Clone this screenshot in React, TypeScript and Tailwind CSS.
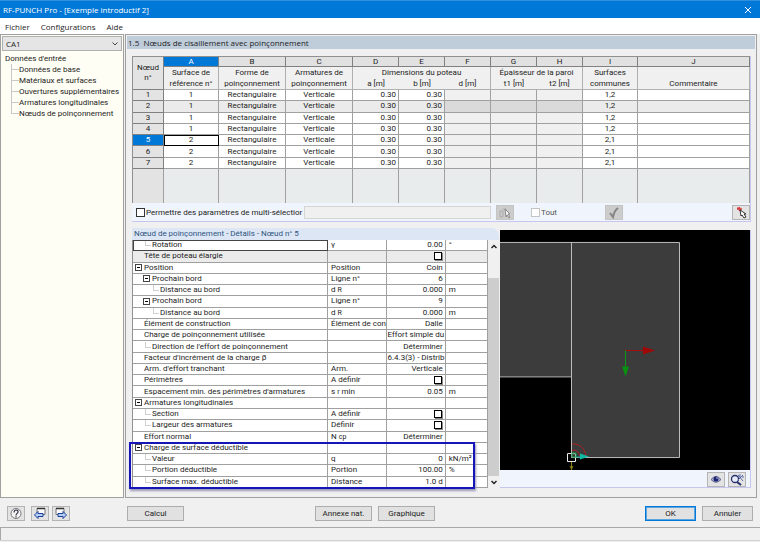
import type { ReactNode } from "react";

type TreeLevel = 0 | 1 | 2;

interface DetailRow {
  label: string;
  level?: TreeLevel;
  open?: boolean;
  symbol?: ReactNode;
  value?: string;
  check?: boolean;
  unit?: ReactNode;
  shade?: boolean;
  focus?: boolean;
}

const navItems = [
  "Données de base",
  "Matériaux et surfaces",
  "Ouvertures supplémentaires",
  "Armatures longitudinales",
  "Nœuds de poinçonnement",
];

const nodes = [
  { id: 1, surface: 1, common: "1,2" },
  { id: 2, surface: 1, common: "1,2" },
  { id: 3, surface: 1, common: "1,2" },
  { id: 4, surface: 1, common: "1,2" },
  { id: 5, surface: 2, common: "2,1" },
  { id: 6, surface: 2, common: "2,1" },
  { id: 7, surface: 2, common: "2,1" },
];

const columns = ["A", "B", "C", "D", "E", "F", "G", "H", "I", "J"];

const subHeads = [
  { text: "référence n°" },
  { text: "poinçonnement" },
  { text: "poinçonnement" },
  { text: "a [m]", joined: true },
  { text: "b [m]", joined: true },
  { text: "d [m]" },
  { text: "t1 [m]", joined: true },
  { text: "t2 [m]" },
  { text: "communes" },
  { text: "Commentaire" },
];

const details: DetailRow[] = [
  { label: "Rotation", level: 1, symbol: "γ", value: "0.00", unit: "°", focus: true },
  { label: "Tête de poteau élargie", check: true, shade: true },
  { label: "Position", open: true, symbol: "Position", value: "Coin" },
  { label: "Prochain bord", level: 1, open: true, symbol: "Ligne n°", value: "6" },
  { label: "Distance au bord", level: 2, symbol: <Sub base="d" sub="R" />, value: "0.000", unit: "m" },
  { label: "Prochain bord", level: 1, open: true, symbol: "Ligne n°", value: "9" },
  { label: "Distance au bord", level: 2, symbol: <Sub base="d" sub="R" />, value: "0.000", unit: "m" },
  { label: "Élément de construction", symbol: "Élément de con", value: "Dalle" },
  { label: "Charge de poinçonnement utilisée", value: "Effort simple du" },
  { label: "Direction de l'effort de poinçonnement", level: 1, value: "Déterminer" },
  { label: "Facteur d'incrément de la charge β", value: "6.4.3(3) - Distrib" },
  { label: "Arm. d'effort tranchant", symbol: "Arm.", value: "Verticale" },
  { label: "Périmètres", symbol: "A définir", check: true },
  { label: "Espacement min. des périmètres d'armatures", symbol: <Sub base="s" sub="r" rest=" min" />, value: "0.05", unit: "m" },
  { label: "Armatures longitudinales", open: true },
  { label: "Section", level: 1, symbol: "A définir", check: true },
  { label: "Largeur des armatures", level: 1, symbol: "Définir", check: true },
  { label: "Effort normal", symbol: <Sub base="N" sub="cp" />, value: "Déterminer" },
  { label: "Charge de surface déductible", open: true },
  { label: "Valeur", level: 1, symbol: "q", value: "0", unit: "kN/m²" },
  { label: "Portion déductible", level: 1, symbol: "Portion", value: "100.00", unit: "%" },
  { label: "Surface max. déductible", level: 1, symbol: "Distance", value: "1.0 d" },
];

function Sub({ base, sub, rest = "" }: { base: string; sub: string; rest?: string }) {
  return (
    <>
      {base} <span className="text-[7px] leading-none">{sub}</span>
      {rest}
    </>
  );
}

function PushButton({ children, primary = false }: { children: ReactNode; primary?: boolean }) {
  return (
    <button
      type="button"
      className={
        primary
          ? "h-[15px] w-[51px] border border-[#0078d7] bg-[#e1e1e1] leading-3 outline outline-1 -outline-offset-2 outline-[#5aa5e0]"
          : "h-[15px] w-[51px] border border-[#adadad] bg-[#e1e1e1] leading-3"
      }
    >
      {children}
    </button>
  );
}

function IconButton({ label, disabled = false, children }: { label: string; disabled?: boolean; children: ReactNode }) {
  return (
    <button
      type="button"
      aria-label={label}
      disabled={disabled}
      className="flex h-[15px] w-[18px] shrink-0 items-center justify-center border border-[#b4b4b4] bg-[#e3e3e3] disabled:border-[#c4c4c4] disabled:bg-[#cccccc]"
    >
      {children}
    </button>
  );
}

function PickIcon({ muted = false }: { muted?: boolean }) {
  return (
    <svg viewBox="0 0 14 13" className="h-[13px] w-[14px]" fill="none">
      {muted ? (
        <>
          <path d="M2 5h3v6H2zM5 3h3v4" stroke="#aaa" />
          <path d="M7 3l1 8 1-2 2 3 1-1-2-3h2z" fill="#f4f4f4" stroke="#8b8b8b" />
        </>
      ) : (
        <>
          <path d="M3 3h5M5.500 1v4M3.500 1.500l4 4" stroke="#d23a3a" strokeWidth="1.400" />
          <path d="M6 4l1 6 1-1 2 3 2-1-2-3h2z" fill="#fff" stroke="#333" />
        </>
      )}
    </svg>
  );
}

function ArrowIcon({ next = false }: { next?: boolean }) {
  return (
    <svg viewBox="0 0 14 13" className="h-[13px] w-[14px]">
      <path d={next ? "M2 1.500h8v6H2z" : "M4 1.500h8v6H4z"} fill="#fafafa" stroke="#777" />
      <path d={next ? "M2 1.500h8" : "M4 1.500h8"} stroke="#333" strokeWidth="1.500" />
      <path
        d={next ? "M12.500 8L9 4.500v2H4v3h5v2z" : "M1.500 8L5 4.500v2h5v3H5v2z"}
        fill="#b4cdf2"
        stroke="#1d3f9c"
      />
    </svg>
  );
}

function TitleBar() {
  return (
    <header className="flex h-[18px] items-center justify-between border-t border-[#2f8fe0] bg-[#0078d7] pl-[3px] text-white">
      <h1>RF-PUNCH Pro - [Exemple introductif 2]</h1>
      <button type="button" aria-label="Fermer" className="flex h-full w-6 items-center justify-center">
        <svg viewBox="0 0 8 8" className="h-2 w-2" stroke="#fff">
          <path d="M1 1l6 6M7 1L1 7" />
        </svg>
      </button>
    </header>
  );
}

function MenuBar() {
  return (
    <nav className="flex h-4 items-center gap-[11px] bg-white pl-[5px]">
      <button type="button">Fichier</button>
      <button type="button">Configurations</button>
      <button type="button">Aide</button>
    </nav>
  );
}

function Sidebar() {
  return (
    <aside className="flex w-[124px] shrink-0 flex-col border border-[#a0a0a0] bg-[#fffef5]">
      <div className="relative m-px">
        <select
          aria-label="Cas de calcul"
          className="h-[15px] w-full appearance-none border border-[#b0b0b0] bg-[#e5e5e5] pl-[3px] font-['Open_Sans',sans-serif] text-[8px] leading-3"
        >
          <option>CA1</option>
        </select>
        <svg viewBox="0 0 6 4" className="pointer-events-none absolute top-[6px] right-[4px] h-1 w-[6px]" fill="none" stroke="#444">
          <path d="M0.500 0.500L3 3l2.500-2.500" />
        </svg>
      </div>
      <div className="pt-px pl-1 leading-[11px] whitespace-nowrap">
        <p>Données d'entrée</p>
        <ul className="ml-[6px]">
          {navItems.map((item, i) => (
            <li key={item} className="flex">
              <span className={i === navItems.length - 1 ? "h-[6px] w-2 border-b border-l border-[#c8c8c8]" : "w-2 border-l border-[#c8c8c8]"}>
                {i < navItems.length - 1 && <span className="block h-[6px] border-b border-[#c8c8c8]" />}
              </span>
              <a href="#" className="text-[#1c1c1c]">{item}</a>
            </li>
          ))}
        </ul>
      </div>
    </aside>
  );
}

const head = "border-r border-[#b0b0b0] bg-[#f0f0f0] font-normal";
const cell = "border-r border-b border-[#a0a0a0]";

function NodeTable() {
  return (
    <table className="h-[147px] w-full table-fixed border-separate border-spacing-0 border-t border-l border-[#909090] text-center leading-[10px]">
      <colgroup>
        <col className="w-[31px]" />
        <col className="w-[55px]" />
        <col className="w-[67px]" />
        <col className="w-[67px]" />
        <col className="w-[46px]" />
        <col className="w-[46px]" />
        <col className="w-[46px]" />
        <col className="w-[46px]" />
        <col className="w-[46px]" />
        <col className="w-[55px]" />
        <col />
      </colgroup>
      <thead>
        <tr className="h-[10px]">
          <th rowSpan={3} className="border-r border-b border-[#808080] bg-[#e3e3e3] font-normal">
            Nœud
            <br />
            n°
          </th>
          {columns.map((c) => (
            <th
              key={c}
              className={
                c === "A"
                  ? "border-r border-b border-[#808080] bg-[#0078d7] font-normal leading-[9px] text-white"
                  : "border-r border-b border-[#808080] bg-[#e1e1e1] font-normal leading-[9px]"
              }
            >
              {c}
            </th>
          ))}
        </tr>
        <tr className="h-[11px]">
          <th className={head}>Surface de</th>
          <th className={head}>Forme de</th>
          <th className={head}>Armatures de</th>
          <th colSpan={3} className={head}>Dimensions du poteau</th>
          <th colSpan={2} className={head}>Épaisseur de la paroi</th>
          <th className={head}>Surfaces</th>
          <th className={head} />
        </tr>
        <tr className="h-[12px]">
          {subHeads.map((h, i) => (
            <th key={i} className={h.joined ? "border-b border-[#b0b0b0] bg-[#f0f0f0] font-normal" : `${head} border-b`}>
              {h.text}
            </th>
          ))}
        </tr>
      </thead>
      <tbody>
        {nodes.map((n) => {
          const shaded = n.id === 2;
          const locked = shaded ? `${cell} bg-[#dadada]` : `${cell} bg-[#f0f0f0]`;
          return (
            <tr key={n.id} className={shaded ? "bg-[#ebebeb]" : "bg-white"}>
              <th
                className={
                  n.id === 5
                    ? "border-r border-b border-[#808080] bg-[#0078d7] font-normal text-white"
                    : "border-r border-b border-[#808080] bg-[#e3e3e3] font-normal"
                }
              >
                {n.id}
              </th>
              <td className={n.id === 5 ? `${cell} outline outline-1 -outline-offset-1 outline-black` : cell}>{n.surface}</td>
              <td className={cell}>Rectangulaire</td>
              <td className={cell}>Verticale</td>
              <td className={`${cell} pr-[2px] text-right`}>0.30</td>
              <td className={`${cell} pr-[2px] text-right`}>0.30</td>
              <td className={locked} />
              <td className={locked} />
              <td className={locked} />
              <td className={cell}>{n.common}</td>
              <td className={cell} />
            </tr>
          );
        })}
        <tr className="h-[34px] bg-[#e8ecec]">
          <td className="border-r border-[#a0a0a0] bg-[#e3e3e3]" />
          {columns.map((c) => (
            <td key={c} className="border-r border-[#a0a0a0]" />
          ))}
        </tr>
      </tbody>
    </table>
  );
}

function MultiSelectBar() {
  return (
    <div className="flex h-[18px] items-center bg-[#f0f4fc] pl-1">
      <label className="flex shrink-0 items-center gap-px whitespace-nowrap">
        <input type="checkbox" className="h-[9px] w-[9px] appearance-none border border-[#333] bg-white" />
        Permettre des paramètres de multi-sélectior
      </label>
      <input type="text" disabled aria-label="Nœuds sélectionnés" className="ml-[2px] h-[13px] min-w-0 flex-1 border border-[#d6d6d6] bg-[#f0f0f0]" />
      <div className="ml-[5px] flex w-[236px] shrink-0 items-center">
        <IconButton label="Sélectionner" disabled>
          <PickIcon muted />
        </IconButton>
        <label className="ml-[17px] flex w-[74px] items-center gap-px text-[#555]">
          <input type="checkbox" disabled className="h-[9px] w-[9px] appearance-none border border-[#c4c4c4] bg-white" />
          Tout
        </label>
        <IconButton label="Appliquer" disabled>
          <svg viewBox="0 0 14 13" className="h-[13px] w-[14px]" fill="none">
            <path d="M3 7l3 4q1-6 5-9" stroke="#858585" strokeWidth="2" />
          </svg>
        </IconButton>
      </div>
      <IconButton label="Choisir dans le graphique">
        <PickIcon />
      </IconButton>
    </div>
  );
}

function Expander({ row }: { row: DetailRow }) {
  if (row.open) {
    return (
      <button type="button" aria-label={`Réduire ${row.label}`} className="mr-[2px] flex h-[7px] w-[7px] shrink-0 items-center justify-center border border-[#444] bg-white">
        <span className="h-px w-[3px] bg-black" />
      </button>
    );
  }
  if (row.level) {
    return <span className="mr-px ml-[2px] h-[6px] w-[6px] shrink-0 self-start border-b border-l border-[#d0d0d0]" />;
  }
  return <span className="w-[9px] shrink-0" />;
}

const indents: Record<TreeLevel, string> = {
  0: "flex items-center pl-[2px] whitespace-nowrap",
  1: "flex items-center pl-[10px] whitespace-nowrap",
  2: "flex items-center pl-[18px] whitespace-nowrap",
};

function DetailTable() {
  return (
    <table className="h-full w-full table-fixed border-separate border-spacing-0 border-l border-[#909090] bg-white leading-[10px]">
      <colgroup>
        <col className="w-[194px]" />
        <col className="w-[59px]" />
        <col className="w-[58px]" />
        <col className="w-[42px]" />
      </colgroup>
      <tbody>
        {details.map((row, i) => (
          <tr key={i} className={row.shade ? "bg-[#ebebeb]" : ""}>
            <th className={row.focus ? `${cell} text-left font-normal outline outline-1 -outline-offset-1 outline-[#444]` : `${cell} text-left font-normal`}>
              <div className={indents[row.level ?? 0]}>
                <Expander row={row} />
                {row.label}
              </div>
            </th>
            <td className={`${cell} pl-[3px] whitespace-nowrap`}>{row.symbol}</td>
            <td className={`${cell} pr-[2px] text-right whitespace-nowrap`}>
              {row.check ? (
                <input type="checkbox" aria-label={row.label} className="mr-px ml-auto block h-2 w-2 appearance-none border border-black bg-white shadow-[1px_1px_0_#888]" />
              ) : (
                row.value
              )}
            </td>
            <td className={`${cell} pl-[3px] whitespace-nowrap`}>{row.unit}</td>
          </tr>
        ))}
      </tbody>
    </table>
  );
}

function ScrollBar() {
  return (
    <div className="flex w-[11px] shrink-0 flex-col items-center bg-[#f0f0f0]">
      <button type="button" aria-label="Défiler vers le haut" className="flex h-3 items-center">
        <svg viewBox="0 0 6 5" className="h-[5px] w-[6px]" fill="none" stroke="#222" strokeWidth="1.5">
          <path d="M0.500 4L3 1.500L5.500 4" />
        </svg>
      </button>
      <span className="h-[26px]" />
      <span className="w-full flex-1 bg-[#cdcdcd]" />
      <button type="button" aria-label="Défiler vers le bas" className="flex h-3 items-center">
        <svg viewBox="0 0 6 5" className="h-[5px] w-[6px]" fill="none" stroke="#222" strokeWidth="1.5">
          <path d="M0.500 1L3 3.500L5.500 1" />
        </svg>
      </button>
    </div>
  );
}

function DetailPanel() {
  return (
    <section className="flex min-w-0 flex-col">
      <h3 className="h-3 rounded-tr-lg bg-[#dce6f5] pl-[2px] leading-3 text-[#2f5580]">
        Nœud de poinçonnement - Détails - Nœud n° 5
      </h3>
      <div className="relative flex flex-1">
        <div className="min-w-0 flex-1">
          <DetailTable />
        </div>
        <ScrollBar />
        <div className="pointer-events-none absolute right-6 -bottom-px -left-[3px] h-[47px] border-2 border-[#1616b8] shadow-[1px_2px_2px_#9999bb]" />
      </div>
    </section>
  );
}

function Preview() {
  return (
    <section className="mt-[2px] flex min-w-0 flex-col border-r border-b border-[#c6c6ee] bg-[#f0f4fc]">
      <div className="relative min-h-0 flex-1 bg-black">
        <svg viewBox="0 0 250 241" preserveAspectRatio="none" className="absolute inset-0 h-full w-full" fill="none">
          <path d="M0 12H71V147H0z" fill="#3c3c3c" />
          <path d="M71 12H179V228H71z" fill="#3c3c3c" />
          <path d="M0 12.500H179.500V228.500H71.500V12M0 147.500H71" stroke="#bdbdbd" />
          <path d="M125 121h19" stroke="#a80c0c" />
          <path d="M143 117l12 4-12 4z" fill="#a00808" />
          <path d="M125.500 121v19" stroke="#0a9a14" />
          <path d="M122 137h7l-3.500 10z" fill="#089010" />
          <path d="M72 215c7-1 13 4 14 12M72 221c5 0 7 2 8 6" stroke="#b02020" />
          <path d="M75 228h6" stroke="#10a898" />
          <path d="M80 224.500l9 3-9 3z" fill="#10b8a4" />
          <path d="M71.500 232v9M70 237l1.500 3 1.500-3" stroke="#8c8410" />
          <path d="M67.500 224.500h8v8h-8z" stroke="#eee" />
          <path d="M72 224h4v4h-4z" stroke="#10a050" />
        </svg>
      </div>
      <div className="flex h-[17px] items-end justify-end gap-[3px] pr-1">
        <IconButton label="Afficher">
          <svg viewBox="0 0 14 13" className="h-[13px] w-[14px]">
            <path d="M2 6.500Q7 0.500 12 6.500Q7 12 2 6.500z" fill="#b0b5da" stroke="#5a5f8c" />
            <circle cx="7" cy="6" r="2.500" fill="#1c2470" />
            <circle cx="8" cy="5" r="0.700" fill="#fff" />
          </svg>
        </IconButton>
        <IconButton label="Zoom tout">
          <svg viewBox="0 0 14 13" className="h-[13px] w-[14px]" fill="none" stroke="#26306c">
            <circle cx="5" cy="6" r="3.500" fill="#e8ecf8" strokeWidth="1.300" />
            <path d="M7 9l4 3" strokeWidth="2" />
            <path d="M8 2l5 6M13 2L8 7M10 1v3M12 4h2" stroke="#5b6aa8" />
          </svg>
        </IconButton>
      </div>
    </section>
  );
}

function Footer() {
  return (
    <footer>
      <div className="flex h-[29px] items-center px-[7px] pt-[2px]">
        <div className="flex w-[120px] shrink-0 items-center">
          <IconButton label="Aide">
            <svg viewBox="0 0 14 13" className="h-[13px] w-[14px]" fill="none" stroke="#777">
              <circle cx="7" cy="6.500" r="5" fill="#f4f4f4" />
              <path d="M5 5.500C5 2 9.500 2.500 9 5C8.800 6.500 7 6.500 7 8.500M7 9.300v1.300" stroke="#334" strokeWidth="1.200" />
            </svg>
          </IconButton>
          <span className="w-[6px]" />
          <IconButton label="Précédent">
            <ArrowIcon />
          </IconButton>
          <span className="w-[3px]" />
          <IconButton label="Suivant">
            <ArrowIcon next />
          </IconButton>
        </div>
        <div className="flex flex-1">
          <button type="button" className="h-[15px] w-[57px] border border-[#adadad] bg-[#e1e1e1] leading-3">Calcul</button>
        </div>
        <div className="flex gap-[6px]">
          <button type="button" className="h-[15px] w-[57px] border border-[#adadad] bg-[#e1e1e1] leading-3">Annexe nat.</button>
          <button type="button" className="h-[15px] w-[57px] border border-[#adadad] bg-[#e1e1e1] leading-3">Graphique</button>
        </div>
        <div className="flex w-[318px] shrink-0 justify-end gap-[6px]">
          <PushButton primary>OK</PushButton>
          <PushButton>Annuler</PushButton>
        </div>
      </div>
      <div className="h-[13px] border-t border-l border-[#a8a8a8]" />
      <div className="h-[2px] border-t border-[#d0d0d0]" />
    </footer>
  );
}

export default function App() {
  return (
    <div className="flex min-h-screen flex-col bg-[#f0f0f0] font-[Roboto,sans-serif] text-[8px] leading-[11px] text-[#1c1c1c]">
      <div className="font-['Open_Sans',sans-serif]">
        <TitleBar />
        <MenuBar />
      </div>
      <div className="flex flex-1 gap-px">
        <Sidebar />
        <main className="mr-[3px] flex min-w-0 flex-1 flex-col border border-[#a0a0a0] p-px">
          <h2 className="h-[13px] bg-[#bfccda] pl-px font-['Open_Sans',sans-serif] leading-[13px] whitespace-pre">
            1.5  Nœuds de cisaillement avec poinçonnement
          </h2>
          <div className="flex flex-1 flex-col gap-[6px] pt-[7px] pr-1 pb-2 pl-[5px]">
            <section className="border-r border-b border-[#c6c6ee]">
              <NodeTable />
              <MultiSelectBar />
            </section>
            <div className="grid flex-1 grid-cols-[367fr_251fr] gap-px">
              <DetailPanel />
              <Preview />
            </div>
          </div>
        </main>
      </div>
      <Footer />
    </div>
  );
}
